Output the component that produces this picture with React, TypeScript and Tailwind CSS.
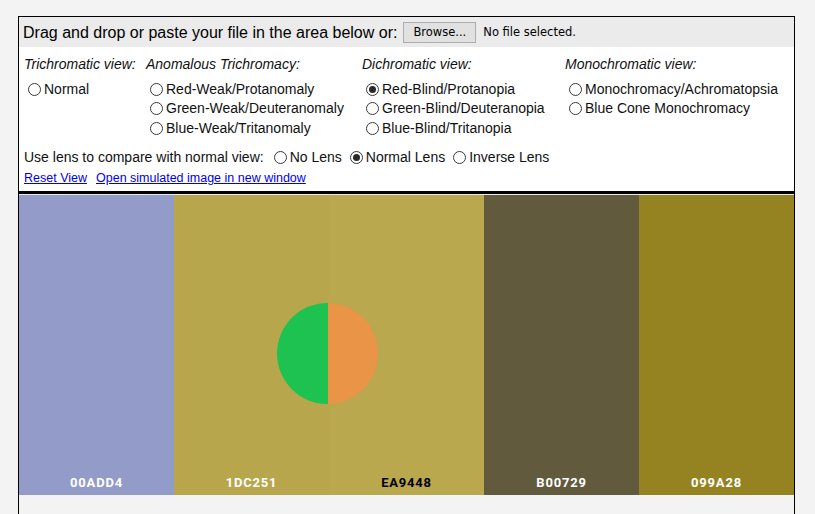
import React from "react";

function Radio({ label, checked = false }: { label: string; checked?: boolean }) {
  return (
    <div className="flex items-center h-[19.5px]">
      <span className="w-[13px] h-[13px] rounded-full border border-[#3a3a3a] bg-white flex items-center justify-center mr-[3px] shrink-0">
        {checked && <span className="w-[7px] h-[7px] rounded-full bg-[#2a2a2a]" />}
      </span>
      <span>{label}</span>
    </div>
  );
}

const swatches = [
  { bg: "bg-[#939bc8]", label: "00ADD4", text: "text-white" },
  { bg: "bg-[#b8a64c]", label: "1DC251", text: "text-white" },
  { bg: "bg-[#b9a84e]", label: "EA9448", text: "text-black" },
  { bg: "bg-[#625a3d]", label: "B00729", text: "text-white" },
  { bg: "bg-[#958322]", label: "099A28", text: "text-white" },
];

export default function App() {
  return (
    <div
      className="w-[815px] h-[514px] bg-[#f3f3f3] pt-[16px] pl-[18px] overflow-hidden text-[#111]"
      style={{ fontFamily: '"Liberation Sans", Arial, sans-serif' }}
    >
      <div className="w-[777px] border-x border-t border-black h-[600px] flex flex-col">
        <div className="h-[30px] bg-[#ebebeb] flex items-center pl-[4px] pt-[1px]">
          <span className="text-[16px] text-black">Drag and drop or paste your file in the area below or:</span>
          <div
            className="ml-[6px] h-[21px] px-[9px] border border-[#adadad] bg-[#e1e1e1] flex items-center text-black"
            style={{ fontFamily: '"DejaVu Sans", "Open Sans", sans-serif', fontSize: "11.5px" }}
          >
            Browse...
          </div>
          <span className="ml-[7px] text-black" style={{ fontFamily: '"DejaVu Sans", "Open Sans", sans-serif', fontSize: "11.5px" }}>
            No file selected.
          </span>
        </div>
        <div className="bg-white px-[5px] pt-[8px] text-[14px] leading-[19.5px]">
          <div className="flex">
            <div className="w-[122px]">
              <div className="italic mb-[5px]">Trichromatic view:</div>
              <div className="pl-[4px]">
                <Radio label="Normal" />
              </div>
            </div>
            <div className="w-[216px]">
              <div className="italic mb-[5px]">Anomalous Trichromacy:</div>
              <div className="pl-[4px]">
                <Radio label="Red-Weak/Protanomaly" />
                <Radio label="Green-Weak/Deuteranomaly" />
                <Radio label="Blue-Weak/Tritanomaly" />
              </div>
            </div>
            <div className="w-[203px]">
              <div className="italic mb-[5px]">Dichromatic view:</div>
              <div className="pl-[4px]">
                <Radio label="Red-Blind/Protanopia" checked />
                <Radio label="Green-Blind/Deuteranopia" />
                <Radio label="Blue-Blind/Tritanopia" />
              </div>
            </div>
            <div>
              <div className="italic mb-[5px]">Monochromatic view:</div>
              <div className="pl-[4px]">
                <Radio label="Monochromacy/Achromatopsia" />
                <Radio label="Blue Cone Monochromacy" />
              </div>
            </div>
          </div>
          <div className="flex items-center mt-[10px]">
            <span className="mr-[10px]">Use lens to compare with normal view:</span>
            <div className="mr-[8px]"><Radio label="No Lens" /></div>
            <div className="mr-[8px]"><Radio label="Normal Lens" checked /></div>
            <Radio label="Inverse Lens" />
          </div>
          <div className="flex text-[12.5px] leading-[16px] pt-[2px] pb-[5px] text-[#0000ee]">
            <span className="underline">Reset View</span>
            <span className="underline ml-[9px]">Open simulated image in new window</span>
          </div>
        </div>
        <div className="h-[3px] bg-black" />
        <div className="h-[1px] bg-[#e8e8e8]" />
        <div className="relative flex h-[300px]">
          {swatches.map((s) => (
            <div key={s.label} className={`flex-1 ${s.bg} flex flex-col justify-end items-center pb-[2px]`}>
              <span
                className={`${s.text} font-bold text-[13px] tracking-[0.8px]`}
                style={{ fontFamily: 'Roboto, "Liberation Sans", sans-serif' }}
              >
                {s.label}
              </span>
            </div>
          ))}
          <div className="absolute left-[258px] top-[108px] w-[101px] h-[101px] rounded-full overflow-hidden flex">
            <div className="flex-1 bg-[#1dc251]" />
            <div className="flex-1 bg-[#ea9448]" />
          </div>
        </div>
      </div>
    </div>
  );
}
